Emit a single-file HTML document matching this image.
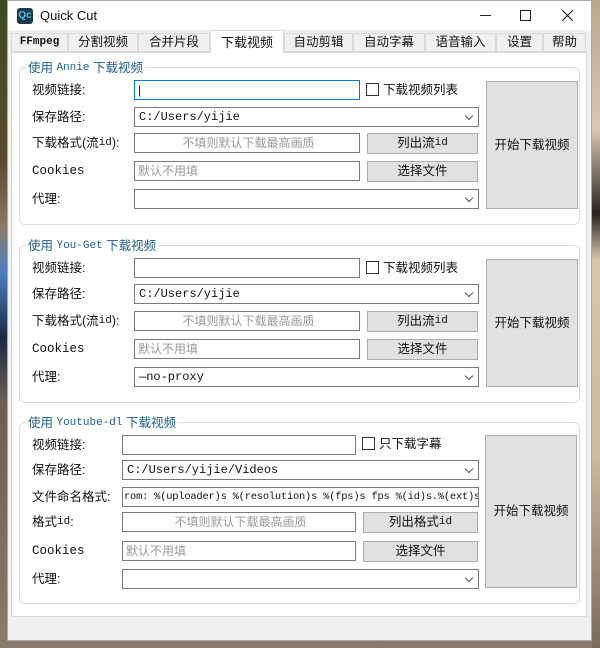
<!DOCTYPE html>
<html><head><meta charset="utf-8"><style>
*{box-sizing:border-box;margin:0;padding:0}
body{width:600px;height:648px;position:relative;overflow:hidden;font-family:"Liberation Sans","Noto Sans CJK SC",sans-serif;font-size:12px;color:#111;line-height:1;
background:linear-gradient(180deg,#3d4a22 0%,#5a4a30 25%,#8a7a66 35%,#4f7fc0 42%,#1c2a44 52%,#6a5e52 62%,#8a7c6c 100%)}
.bgr{position:absolute;left:592px;top:0;width:8px;height:648px;background:linear-gradient(180deg,#b9a890 0%,#d8c8b2 20%,#2a2220 33%,#d6c6ae 40%,#cdbba2 70%,#7a6a5a 100%)}
.win{position:absolute;left:7px;top:0;width:585px;height:641px;background:#f0f0f0;border:1px solid #aaa}
.title{position:absolute;left:0;top:0;width:100%;height:29px;background:#fff}
.logo{position:absolute;left:9px;top:7px;width:16px;height:16px;background:#1f3a4a;border-radius:3px;color:#4fc6e8;font-size:10px;font-weight:bold;line-height:16px;text-align:center}
.ttext{position:absolute;left:32px;top:8px;font-size:13px;color:#111}
.tab{position:absolute;top:32px;height:19px;border:1px solid #d9d9d9;background:#f0f0f0;display:flex;align-items:center;justify-content:center;font-size:12.5px}
.tab.sel{top:29px;height:23px;background:#fff;border-bottom:none;font-size:13px;z-index:2}
.panel{position:absolute;left:3px;top:51px;width:576px;height:565px;background:#fff;border:1px solid #d9d9d9}
.grp{position:absolute;border:1px solid #dcdcdc;border-radius:6px}
.gt{position:absolute;background:#fff;color:#1f5f86;font-size:12.5px;padding:0 2px;height:14px;display:flex;align-items:center}
.mono{font-family:"Liberation Mono","DejaVu Sans Mono",monospace;font-size:11px}
.lbl{position:absolute;font-size:12.5px;white-space:nowrap;height:20px;display:flex;align-items:center}
.in,.cb{position:absolute;height:20px;border:1px solid #7a7a7a;background:#fff;font-size:12px;padding-left:3px;color:#999;white-space:nowrap;overflow:hidden;display:flex;align-items:center}
.in.c{justify-content:center}
.cb{color:#111;padding-left:4px}
.cb:after{content:"";position:absolute;right:6px;top:5px;width:5px;height:5px;border-right:1px solid #555;border-bottom:1px solid #555;transform:rotate(45deg)}
.btn{position:absolute;height:21px;background:#e1e1e1;border:1px solid #adadad;display:flex;align-items:center;justify-content:center;font-size:12.5px}
.big{position:absolute;background:#e1e1e1;border:1px solid #adadad;display:flex;align-items:center;justify-content:center;font-size:12.5px}
.chk{position:absolute;width:13px;height:13px;border:1px solid #333;background:#fff}
</style></head><body>
<div class="bgr"></div>
<div class="win">
<div class="title"><div class="logo">Qc</div><div class="ttext">Quick Cut</div>
<div style="position:absolute;left:472px;top:14px;width:11px;height:1px;background:#222"></div>
<div style="position:absolute;left:512px;top:9px;width:11px;height:11px;border:1px solid #222"></div>
<svg style="position:absolute;left:554px;top:9px" width="11" height="11"><path d="M0 0L11 11M11 0L0 11" stroke="#222" stroke-width="1.1"/></svg></div>
<div class="tab mono" style="left:3px;width:57px;font-weight:bold">FFmpeg</div>
<div class="tab" style="left:60px;width:70px">分割视频</div>
<div class="tab" style="left:130px;width:72px">合并片段</div>
<div class="tab sel" style="left:202px;width:74px">下载视频</div>
<div class="tab" style="left:276px;width:69px">自动剪辑</div>
<div class="tab" style="left:345px;width:72px">自动字幕</div>
<div class="tab" style="left:417px;width:71px">语音输入</div>
<div class="tab" style="left:488px;width:47px">设置</div>
<div class="tab" style="left:535px;width:43px">帮助</div>
<div class="panel"></div>
</div>

<!-- group 1 -->
<div class="grp" style="left:19px;top:67px;width:561px;height:158px"></div>
<div class="gt" style="left:26px;top:61px">使用&nbsp;<span class="mono">Annie</span>&nbsp;下载视频</div>
<div class="lbl" style="left:32px;top:80px">视频链接:</div>
<div class="in" style="left:134px;top:80px;width:226px;border-color:#0078d7;color:#111">|</div>
<div class="chk" style="left:366px;top:83px"></div><div class="lbl" style="left:383px;top:80px">下载视频列表</div>
<div class="lbl" style="left:32px;top:107px">保存路径:</div>
<div class="cb mono" style="left:134px;top:107px;width:345px">C:/Users/yijie</div>
<div class="lbl" style="left:32px;top:133px">下载格式(流<span class="mono">id</span>):</div>
<div class="in c" style="left:134px;top:133px;width:226px">不填则默认下载最高画质</div>
<div class="btn" style="left:367px;top:133px;width:111px">列出流<span class="mono">id</span></div>
<div class="lbl mono" style="left:32px;top:161px">Cookies</div>
<div class="in" style="left:134px;top:161px;width:226px">默认不用填</div>
<div class="btn" style="left:367px;top:161px;width:111px">选择文件</div>
<div class="lbl" style="left:32px;top:189px">代理:</div>
<div class="cb" style="left:134px;top:189px;width:345px"></div>
<div class="big" style="left:486px;top:81px;width:92px;height:128px">开始下载视频</div>

<!-- group 2 -->
<div class="grp" style="left:19px;top:245px;width:561px;height:158px"></div>
<div class="gt" style="left:26px;top:239px">使用&nbsp;<span class="mono">You-Get</span>&nbsp;下载视频</div>
<div class="lbl" style="left:32px;top:258px">视频链接:</div>
<div class="in" style="left:134px;top:258px;width:226px"></div>
<div class="chk" style="left:366px;top:261px"></div><div class="lbl" style="left:383px;top:258px">下载视频列表</div>
<div class="lbl" style="left:32px;top:284px">保存路径:</div>
<div class="cb mono" style="left:134px;top:284px;width:345px">C:/Users/yijie</div>
<div class="lbl" style="left:32px;top:311px">下载格式(流<span class="mono">id</span>):</div>
<div class="in c" style="left:134px;top:311px;width:226px">不填则默认下载最高画质</div>
<div class="btn" style="left:367px;top:311px;width:111px">列出流<span class="mono">id</span></div>
<div class="lbl mono" style="left:32px;top:339px">Cookies</div>
<div class="in" style="left:134px;top:339px;width:226px">默认不用填</div>
<div class="btn" style="left:367px;top:339px;width:111px">选择文件</div>
<div class="lbl" style="left:32px;top:367px">代理:</div>
<div class="cb mono" style="left:134px;top:367px;width:345px">—no-proxy</div>
<div class="big" style="left:486px;top:259px;width:92px;height:128px">开始下载视频</div>

<!-- group 3 -->
<div class="grp" style="left:19px;top:422px;width:561px;height:182px"></div>
<div class="gt" style="left:26px;top:416px">使用&nbsp;<span class="mono">Youtube-dl</span>&nbsp;下载视频</div>
<div class="lbl" style="left:32px;top:435px">视频链接:</div>
<div class="in" style="left:122px;top:435px;width:234px"></div>
<div class="chk" style="left:362px;top:437px"></div><div class="lbl" style="left:379px;top:434px">只下载字幕</div>
<div class="lbl" style="left:32px;top:460px">保存路径:</div>
<div class="cb mono" style="left:122px;top:460px;width:357px">C:/Users/yijie/Videos</div>
<div class="lbl" style="left:32px;top:487px">文件命名格式:</div>
<div class="in mono" style="left:122px;top:487px;width:357px;color:#111;padding-left:1px;font-size:10.4px;letter-spacing:-0.2px">rom: %(uploader)s %(resolution)s %(fps)s fps %(id)s.%(ext)s</div>
<div class="lbl" style="left:32px;top:512px">格式<span class="mono">id</span>:</div>
<div class="in c" style="left:122px;top:512px;width:234px">不填则默认下载最高画质</div>
<div class="btn" style="left:363px;top:512px;width:115px">列出格式<span class="mono">id</span></div>
<div class="lbl mono" style="left:32px;top:541px">Cookies</div>
<div class="in" style="left:122px;top:541px;width:234px">默认不用填</div>
<div class="btn" style="left:363px;top:541px;width:115px">选择文件</div>
<div class="lbl" style="left:32px;top:569px">代理:</div>
<div class="cb" style="left:122px;top:569px;width:357px"></div>
<div class="big" style="left:485px;top:435px;width:92px;height:153px">开始下载视频</div>
</body></html>
